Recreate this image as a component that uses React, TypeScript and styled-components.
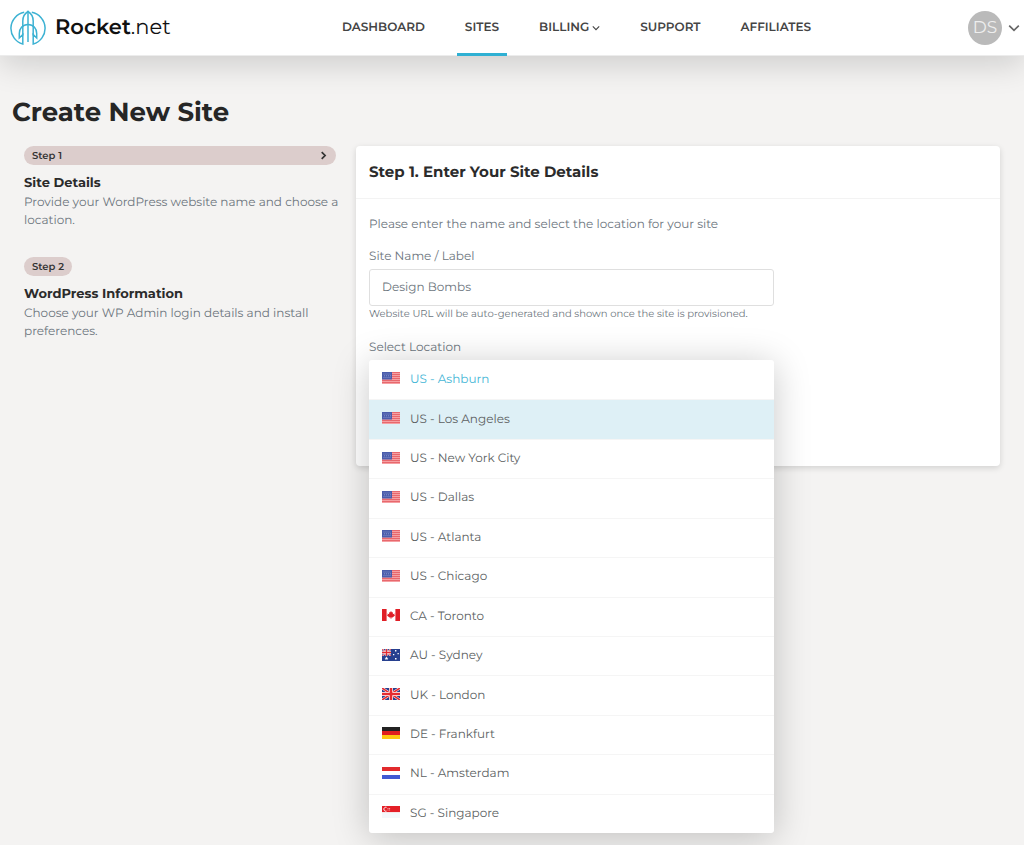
import React, { useState } from 'react';
import styled, { createGlobalStyle } from 'styled-components';

const GlobalStyle = createGlobalStyle`
  *, *::before, *::after { box-sizing: border-box; }
  body {
    margin: 0;
    background: #f4f3f2;
    color: #6c757d;
    font-family: Montserrat, Inter, "Open Sans", sans-serif;
    font-size: 12px;
    line-height: 18px;
    text-rendering: geometricPrecision;
  }
  h1, h2, h3, p, ol, ul { margin: 0; padding: 0; }
  ol, ul { list-style: none; }
  button, input { font: inherit; text-rendering: inherit; }
`;

const Page = styled.div`
  min-height: 100vh;
`;

const Header = styled.header`
  display: flex;
  align-items: center;
  height: 56px;
  padding: 0 4px 0 10px;
  background: #fff;
  border-bottom: 1px solid #ececec;
  box-shadow: 0 8px 32px rgba(0, 0, 0, 0.16);
`;

const Brand = styled.a`
  display: flex;
  align-items: center;
  gap: 9px;
  flex: 0 0 324px;
  color: #111;
  font-size: 21px;
  font-weight: 400;
  line-height: 28px;
  text-decoration: none;

  strong { font-weight: 600; }
`;

const Nav = styled.nav`
  display: flex;
  align-self: stretch;
  gap: 24px;
  margin-bottom: -1px;
`;

const NavLink = styled.a<{ $active?: boolean }>`
  display: flex;
  align-items: center;
  gap: 3px;
  padding: 2px 8px 0;
  border-bottom: 3px solid ${(p) => (p.$active ? '#2fb0d3' : 'transparent')};
  color: #444;
  font-size: 12px;
  font-weight: 600;
  text-decoration: none;
  white-space: nowrap;
`;

const UserMenu = styled.button`
  display: flex;
  align-items: center;
  gap: 6px;
  margin-left: auto;
  padding: 0;
  border: 0;
  background: none;
  color: #666;
`;

const Avatar = styled.span`
  display: grid;
  place-items: center;
  width: 34px;
  height: 34px;
  border-radius: 50%;
  background: #bababa;
  color: #eee;
  font-size: 17px;
`;

const Main = styled.main`
  padding: 38px 24px 24px 12px;
`;

const Title = styled.h1`
  color: #262626;
  font-size: 26px;
  font-weight: 700;
  line-height: 36px;
`;

const Columns = styled.div`
  display: grid;
  grid-template-columns: minmax(0, 312fr) minmax(0, 644fr);
  align-items: start;
  gap: 20px;
  padding: 16px 0 0 12px;
`;

const Steps = styled.ol`
  display: grid;
  gap: 27px;
`;

const Badge = styled.div<{ $wide?: boolean }>`
  display: flex;
  align-items: center;
  justify-content: space-between;
  width: ${(p) => (p.$wide ? '100%' : 'fit-content')};
  height: 19px;
  margin-bottom: 8px;
  padding: 0 8px;
  border-radius: 10px;
  background: #dccdcc;
  color: #333;
  font-size: 10px;
  font-weight: 600;
`;

const StepTitle = styled.h2`
  color: #2b2b2b;
  font-size: 13px;
  font-weight: 700;
  line-height: 20px;
`;

const StepText = styled.p`
  margin: 1px -8px 0 0;
`;

const Card = styled.section`
  border-radius: 4px;
  background: #fff;
  box-shadow: 0 2px 6px rgba(0, 0, 0, 0.14);
`;

const CardHeader = styled.h2`
  padding: 16px 13px;
  border-bottom: 1px solid #f3f3f3;
  color: #2b2b2b;
  font-size: 15px;
  font-weight: 700;
  line-height: 20px;
`;

const CardBody = styled.div`
  padding: 17px 13px 66px;
`;

const Field = styled.div`
  max-width: 405px;
  padding-top: 14px;
`;

const Label = styled.label`
  display: block;
  margin-bottom: 3px;
`;

const TextInput = styled.input`
  display: block;
  width: 100%;
  height: 37px;
  padding: 0 12px;
  border: 1px solid #dfdfdf;
  border-radius: 3px;
  color: #6c757d;
  background: #fff;
`;

const Hint = styled.p`
  padding-bottom: 3px;
  font-size: 10px;
  line-height: 16px;
`;

const Picker = styled.div`
  position: relative;
  height: 40px;
`;

const Menu = styled.ul`
  position: absolute;
  top: 0;
  left: 0;
  right: 0;
  display: grid;
  grid-auto-rows: 1fr;
  height: 473px;
  border-radius: 3px;
  background: #fff;
  box-shadow: 0 4px 36px rgba(0, 0, 0, 0.22);
`;

const Option = styled.li`
  display: grid;

  & + & { border-top: 1px solid #f5f5f5; }
`;

const OptionButton = styled.button<{ $selected: boolean; $hovered: boolean }>`
  display: flex;
  align-items: center;
  gap: 10px;
  padding: 0 13px;
  border: 0;
  background: ${(p) => (p.$hovered ? '#def0f6' : 'transparent')};
  color: ${(p) => (p.$selected ? '#45b6d6' : '#5c5f62')};
  text-align: left;

  svg { margin-bottom: 3px; }
`;

function Chevron({ size, right }: { size: number; right?: boolean }) {
  return (
    <svg width={size} height={size} viewBox="0 0 10 10" fill="none" stroke="currentColor" strokeWidth={right ? 1.9 : 1.4} aria-hidden="true">
      <path d={right ? 'M3 1.2 6.8 5 3 8.8' : 'M1 3 5 7l4-4'} />
    </svg>
  );
}

function Logo() {
  return (
    <svg width="36" height="36" viewBox="0 0 36 36" fill="none" stroke="#3db2d3" strokeWidth="1.5" aria-hidden="true">
      <path d="M14.2 2.3A16.300 16.300 0 0 0 12.800 34V24.500L9.300 28V23.500C9.300 19 12.300 14.600 18 14.600S26.700 19 26.700 23.500V28L23.200 24.500V34A16.300 16.300 0 0 0 21.800 2.300" />
      <path d="M12.800 25.500V11C12.800 6 15.500 3 18 1.500 20.500 3 23.200 6 23.200 11V25.500" />
      <path d="M18 .8V32" />
    </svg>
  );
}

const UnionJack = () => (
  <>
    <path fill="#27408f" d="M0 0h18v12H0z" />
    <path stroke="#fff" strokeWidth="2.600" d="m0 0 18 12M18 0 0 12" />
    <path stroke="#e52b30" strokeWidth="1.600" d="m0 0 18 12M18 0 0 12" />
    <path stroke="#fff" strokeWidth="4" d="M9 0v12M0 6h18" />
    <path stroke="#e52b30" strokeWidth="2.600" d="M9 0v12M0 6h18" />
  </>
);

const flags: Record<string, React.ReactNode> = {
  US: (
    <>
      <path fill="#f5a0a3" d="M0 0h18v12H0z" />
      <path stroke="#e8686d" strokeWidth="1" d="M0 .5h18M0 2.500h18M0 4.500h18M0 6.500h18M0 8.500h18M0 10.500h18" />
      <path fill="#4a5cab" d="M0 0h10v7.500H0z" />
      <path stroke="#8c99cf" strokeWidth=".9" strokeDasharray="1 1" d="M1.500 2h7M2 3.800h7M1.500 5.600h7" />
    </>
  ),
  CA: (
    <>
      <path fill="#fff" d="M0 0h18v12H0z" />
      <path fill="#e01f26" d="M0 0h4.600v12H0zM13.400 0H18v12h-4.600zM9 2l1 1.600 1-.3-.2 1.900 1.800-.7-.3 1.500.8.600L10.500 8.400H9.300V10h-.6V8.400H7.500L4.900 6.600l.8-.6-.3-1.500 1.800.7L7 3.300l1 .3z" />
    </>
  ),
  AU: (
    <>
      <path fill="#27408f" d="M0 0h18v12H0z" />
      <svg width="9" height="7" viewBox="0 0 18 12" preserveAspectRatio="none"><UnionJack /></svg>
      <path fill="#fff" d="m4.500 7.600.6 1.200 1.300.1-1 .8.3 1.300-1.200-.7-1.200.7.3-1.300-1-.8 1.300-.1zM13 1h1.400v1.400H13zM15.500 4h1.300v1.300h-1.300zM11 5h1.300v1.300H11zM13 9h1.500v1.500H13z" />
    </>
  ),
  UK: <UnionJack />,
  DE: (
    <>
      <path fill="#222" d="M0 0h18v4H0z" />
      <path fill="#e01f1f" d="M0 4h18v4H0z" />
      <path fill="#fdc912" d="M0 8h18v4H0z" />
    </>
  ),
  NL: (
    <>
      <path fill="#e22a2d" d="M0 0h18v4H0z" />
      <path fill="#fff" d="M0 4h18v4H0z" />
      <path fill="#4059d3" d="M0 8h18v4H0z" />
    </>
  ),
  SG: (
    <>
      <path fill="#e41f27" d="M0 0h18v6.300H0z" />
      <path fill="#f4f8fb" d="M0 6.300h18V12H0z" />
      <path stroke="#fff" d="M4.500 1.300a2 2 0 1 0 0 3.800" />
      <path stroke="#f7aaad" strokeDasharray="1 .6" d="M5.500 2.500h3M5.500 4h3" />
    </>
  ),
};

function Flag({ code }: { code: string }) {
  return (
    <svg width="18" height="12" viewBox="0 0 18 12" fill="none" aria-hidden="true">
      {flags[code]}
    </svg>
  );
}

const locations = [
  'US - Ashburn', 'US - Los Angeles', 'US - New York City', 'US - Dallas',
  'US - Atlanta', 'US - Chicago', 'CA - Toronto', 'AU - Sydney',
  'UK - London', 'DE - Frankfurt', 'NL - Amsterdam', 'SG - Singapore',
];

export default function App() {
  const [siteName, setSiteName] = useState('Design Bombs');
  const [selected, setSelected] = useState(locations[0]);
  const [hovered, setHovered] = useState(locations[1]);

  return (
    <Page>
      <GlobalStyle />
      <Header>
        <Brand href="#">
          <Logo />
          <span><strong>Rocket</strong>.net</span>
        </Brand>
        <Nav>
          <NavLink href="#">DASHBOARD</NavLink>
          <NavLink href="#" $active aria-current="page">SITES</NavLink>
          <NavLink href="#">BILLING <Chevron size={8} /></NavLink>
          <NavLink href="#">SUPPORT</NavLink>
          <NavLink href="#">AFFILIATES</NavLink>
        </Nav>
        <UserMenu type="button" aria-label="Account menu">
          <Avatar>DS</Avatar>
          <Chevron size={12} />
        </UserMenu>
      </Header>
      <Main>
        <Title>Create New Site</Title>
        <Columns>
          <Steps>
            <li>
              <Badge $wide>Step 1 <Chevron size={9} right /></Badge>
              <StepTitle>Site Details</StepTitle>
              <StepText>Provide your WordPress website name and choose a location.</StepText>
            </li>
            <li>
              <Badge>Step 2</Badge>
              <StepTitle>WordPress Information</StepTitle>
              <StepText>Choose your WP Admin login details and install preferences.</StepText>
            </li>
          </Steps>
          <Card>
            <CardHeader>Step 1. Enter Your Site Details</CardHeader>
            <CardBody>
              <p>Please enter the name and select the location for your site</p>
              <Field>
                <Label htmlFor="site-name">Site Name / Label</Label>
                <TextInput id="site-name" value={siteName} onChange={(e) => setSiteName(e.target.value)} />
                <Hint>Website URL will be auto-generated and shown once the site is provisioned.</Hint>
              </Field>
              <Field>
                <Label as="div" id="location-label">Select Location</Label>
                <Picker>
                  <Menu aria-labelledby="location-label">
                    {locations.map((name) => (
                      <Option key={name}>
                        <OptionButton
                          type="button"
                          aria-pressed={name === selected}
                          $selected={name === selected}
                          $hovered={name === hovered}
                          onMouseEnter={() => setHovered(name)}
                          onClick={() => setSelected(name)}
                        >
                          <Flag code={name.slice(0, 2)} />
                          {name}
                        </OptionButton>
                      </Option>
                    ))}
                  </Menu>
                </Picker>
              </Field>
            </CardBody>
          </Card>
        </Columns>
      </Main>
    </Page>
  );
}
